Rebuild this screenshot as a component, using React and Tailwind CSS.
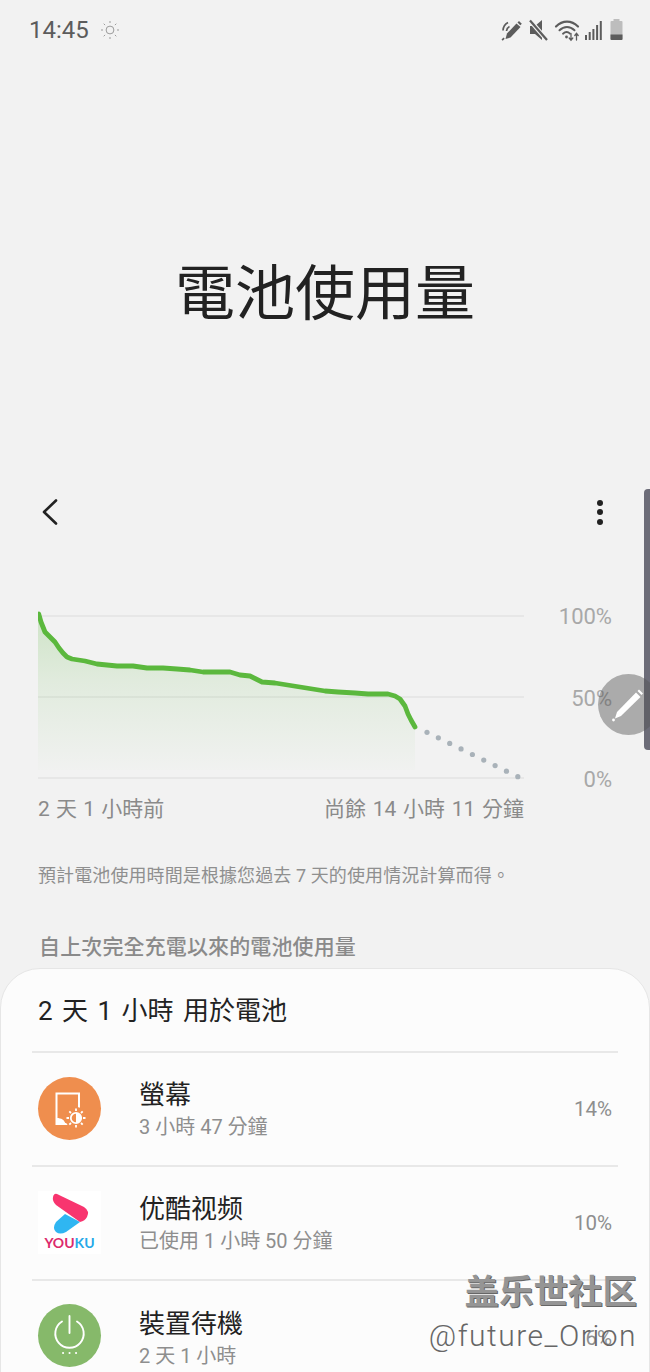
const curve = "38.7,614 41,622 45,632 50,637 55,642 59,648 63,653 67,657 72,659 85,661 97,664 117,666 133,666 147,668 163,668 177,669 190,670 203,672 230,672 240,675 250,676 256,679 262,682 275,683 300,687 325,691 338,692 355,693 368,694 388,694 395,696 400,699 405,706 408,714 411,720 415,727";
const dots = [0, 1, 2, 3, 4, 5, 6, 7, 8];

function Chart() {
  return (
    <svg width="486" height="172" viewBox="38 610 486 172" className="block shrink-0" fill="none">
      <defs>
        <linearGradient id="fade" x1="0" y1="0" x2="0" y2="1">
          <stop offset="0" stopColor="#5ab53c" stopOpacity="0.24" />
          <stop offset="0.45" stopColor="#5ab53c" stopOpacity="0.11" />
          <stop offset="1" stopColor="#5ab53c" stopOpacity="0.01" />
        </linearGradient>
      </defs>
      <path d="M38 616H524M38 697H524M38 778H524" stroke="#e3e3e3" strokeWidth="1.6" />
      <polygon points={`38,612 ${curve} 415,770 38,770`} fill="url(#fade)" />
      <polyline points={curve} stroke="#5bb83d" strokeWidth="4.8" strokeLinejoin="round" strokeLinecap="round" />
      {dots.map((i) => (
        <circle key={i} cx={427 + i * 11.35} cy={732.3 + i * 5.55} r="2.6" fill="#a9b2b9" />
      ))}
    </svg>
  );
}

function StatusIcons() {
  return (
    <svg width="122" height="24" viewBox="0 0 122 24" fill="none" className="block">
      <g fill="#5c5c5c">
        <path d="M6 15.500 L15.500 5.500 L19.500 9 L9.500 19.500 L4.500 21Z" />
        <path d="M0.500 21.500l2-2 1.200 1.200-2 2z" />
        <path d="M16.500 4.500l1.500-1.500 2.800 2.800-1.500 1.500z" />
      </g>
      <path d="M2 12.500c.2-3.500 2-6.500 5-8M5.500 13c.2-1.800 1.200-3.500 3-4.500" stroke="#5c5c5c" strokeWidth="1.700" />
      <g transform="translate(29 0)">
        <path d="M0 8h5L12 2v20l-7-6H0z" fill="#5c5c5c" />
        <path d="M0 2.500 L17 22" stroke="#f2f2f2" strokeWidth="4.500" />
        <path d="M0 2.500 L17 22" stroke="#5c5c5c" strokeWidth="2.200" />
      </g>
      <g transform="translate(54 0)" stroke="#5c5c5c" strokeLinecap="round">
        <path d="M1 8.500C7.500 2 16.500 2 23 8.500" strokeWidth="2.200" />
        <path d="M4.500 12.200C9 7.800 15 7.800 19.500 12.200" strokeWidth="2" />
        <path d="M8 15.700c2.300-2 5-2 7 0" strokeWidth="1.900" />
        <circle cx="11.500" cy="19" r="1.400" fill="#5c5c5c" stroke="none" />
        <path d="M16 15.500v6.500M14.200 20l1.800 2.200 1.800-2.200" strokeWidth="1.300" />
        <path d="M21.500 22v-6.500M19.800 17.500l1.700-2.100 1.700 2.100" strokeWidth="1.300" />
      </g>
      <g transform="translate(84 0)" fill="#5c5c5c">
        <rect x="0" y="17" width="2" height="5" />
        <rect x="3.700" y="14" width="2" height="8" />
        <rect x="7.400" y="11" width="2" height="11" />
        <rect x="11.100" y="7" width="2" height="15" />
        <rect x="14.800" y="3" width="2" height="19" />
      </g>
      <g transform="translate(109 0)">
        <rect x="3.500" y="1" width="6" height="3" fill="#bdbdbd" />
        <rect x="0.500" y="3" width="12" height="19" rx="1" fill="#bdbdbd" />
        <path d="M.5 16.500h12v4.500a1 1 0 0 1-1 1h-10a1 1 0 0 1-1-1z" fill="#5c5c5c" />
      </g>
    </svg>
  );
}

function Sun() {
  return (
    <svg width="20" height="20" viewBox="0 0 20 20" fill="none" stroke="#9b9b9b" strokeWidth="1">
      <circle cx="10" cy="10" r="3.900" />
      <path d="M10 1v2M10 17v2M1 10h2M17 10h2M3.700 3.700l1.400 1.400M14.900 14.900l1.400 1.400M3.700 16.300l1.400-1.400M14.900 5.100l1.400-1.400" />
    </svg>
  );
}

function ScreenIcon() {
  return (
    <div className="flex h-[63px] w-[63px] shrink-0 items-center justify-center rounded-full bg-[#ef8e4e]">
      <svg width="63" height="63" viewBox="0 0 63 63" fill="none">
        <path d="M41 32V16.500H18.500V47H32" stroke="#fff" strokeWidth="2" />
        <path d="M18.500 41c5 0 8 2 9 6H18.500z" fill="#fff" />
        <circle cx="38" cy="41" r="11" fill="#ef8e4e" />
        <circle cx="38" cy="41" r="5.200" stroke="#fff" strokeWidth="1.800" />
        <path d="M38 35.800a5.200 5.200 0 0 1 0 10.400z" fill="#fff" />
        <path d="M38 31.500v2.500M38 48v2.500M28.500 41H31M45 41h2.500M31.300 34.300l1.700 1.700M43 46l1.700 1.700M31.300 47.700l1.700-1.700M43 36l1.700-1.700" stroke="#fff" strokeWidth="1.800" />
      </svg>
    </div>
  );
}

function YoukuIcon() {
  return (
    <div className="flex h-[63px] w-[63px] shrink-0 flex-col items-center bg-white">
      <svg width="63" height="44" viewBox="0 0 63 44" fill="none" className="shrink-0">
        <path d="M27 23 L42 31 L28 41 Q22 44 18 41 Q14 37 18 31z" fill="#2fb6f2" />
        <path d="M19 3 L46 16 Q52 20 49 26 Q47 30 42 31 L18 14 Q14 10 15 6 Q16 2 19 3Z" fill="#f8356f" />
      </svg>
      <div className="mt-[1px] text-[14px] leading-[14px] font-bold" style={{ fontFamily: "Lato, sans-serif" }}>
        <span className="text-[#dc2a6c]">YOU</span>
        <span className="text-[#27a9e8]">KU</span>
      </div>
    </div>
  );
}

function PowerIcon() {
  return (
    <div className="flex h-[63px] w-[63px] shrink-0 items-center justify-center rounded-full bg-[#86b96a]">
      <svg width="63" height="63" viewBox="0 0 63 63" fill="none" stroke="#fff" strokeWidth="1.900" strokeLinecap="round">
        <path d="M31.500 12v17" />
        <path d="M24 17.500a14.200 14.200 0 1 0 15 0" />
        <path d="M25 49h.1M31.500 49h.1M38 49h.1" strokeWidth="2" />
      </svg>
    </div>
  );
}

function Row({ icon, title, sub, pct, last, sc }) {
  return (
    <div className={`flex h-[114px] shrink-0 items-center pr-[6px] pl-[6px] ${last ? "" : "border-b-2 border-[#e8e8e8]"}`}>
      <div className={last ? "mt-[-5px]" : "mt-[-2px]"}>{icon}</div>
      <div className="mt-[2px] ml-[38px] flex flex-1 flex-col" style={sc ? { fontFamily: 'Roboto, "Noto Sans CJK SC", sans-serif' } : undefined}>
        <div className="text-[26px] leading-[34px] text-[#222]">{title}</div>
        <div className="text-[20px] leading-[31px] text-[#8e8e8e]">{sub}</div>
      </div>
      <div className="text-[20.500px] text-[#8e8e8e]">{pct}</div>
    </div>
  );
}

export default function App() {
  return (
    <div
      className="relative flex h-[1372px] w-[650px] flex-col overflow-hidden bg-[#f2f2f2]"
      style={{ fontFamily: 'Roboto, "Noto Sans CJK TC", sans-serif' }}
    >
      <div className="flex h-[60px] shrink-0 items-center pr-[27px] pl-[29px]">
        <span className="text-[24px] leading-none text-[#5c5c5c]">14:45</span>
        <span className="ml-[11px]"><Sun /></span>
        <span className="ml-auto"><StatusIcons /></span>
      </div>

      <div className="flex h-[420px] shrink-0 items-start justify-center pt-[197px]">
        <h1 className="text-[60px] leading-[76px] font-normal text-[#222]">電池使用量</h1>
      </div>

      <div className="flex h-[64px] shrink-0 items-center justify-between pr-[47px] pl-[41px]">
        <svg width="18" height="28" viewBox="0 0 18 28" fill="none" stroke="#222" strokeWidth="2.600" strokeLinecap="round" strokeLinejoin="round">
          <path d="M15 2.500 3 14l12 11.500" />
        </svg>
        <div className="flex flex-col gap-[3.500px]">
          <span className="h-[6px] w-[6px] rounded-full bg-[#222]" />
          <span className="h-[6px] w-[6px] rounded-full bg-[#222]" />
          <span className="h-[6px] w-[6px] rounded-full bg-[#222]" />
        </div>
      </div>

      <div className="mt-[66px] flex h-[178px] shrink-0 items-start pl-[38px]">
        <Chart />
        <div className="mt-[-6px] ml-[34px] flex h-[189px] w-[54px] flex-col items-end justify-between text-[22px] leading-[26px] text-[#a8a8a8]">
          <span>100%</span>
          <span>50%</span>
          <span>0%</span>
        </div>
      </div>

      <div className="mt-[7px] flex w-[524px] shrink-0 justify-between pl-[38px] text-[21px] leading-[28px] text-[#8a8a8a]">
        <span className="[word-spacing:1px]">2 天 1 小時前</span>
        <span className="[word-spacing:1.500px]">尚餘 14 小時 11 分鐘</span>
      </div>

      <p className="mt-[41px] shrink-0 pl-[38px] text-[18px] leading-[24px] tracking-[0.1px] text-[#8f8f8f]">預計電池使用時間是根據您過去 7 天的使用情況計算而得。</p>

      <h2 className="mt-[45px] shrink-0 pl-[39px] text-[21px] leading-[28px] font-medium tracking-[0.13px] text-[#8a8a8a]">自上次完全充電以來的電池使用量</h2>

      <div className="mt-[7px] flex flex-1 flex-col rounded-t-[40px] border border-[#e6e6e6] bg-[#fcfcfc] px-[31px]">
        <div className="flex h-[84px] shrink-0 items-center border-b-2 border-[#e8e8e8] pt-[3px] pl-[6px] text-[26px] text-[#222] [word-spacing:3px]">2 天 1 小時 用於電池</div>
        <Row icon={<ScreenIcon />} title="螢幕" sub="3 小時 47 分鐘" pct="14%" />
        <Row icon={<YoukuIcon />} title="优酷视频" sub="已使用 1 小時 50 分鐘" pct="10%" sc />
        <Row icon={<PowerIcon />} title="裝置待機" sub="2 天 1 小時" pct="6%" last />
      </div>

      <div className="absolute top-[489px] right-0 h-[261px] w-[6px] rounded-l-[4px] bg-[#6c6c78]" />
      <div className="absolute top-[674px] left-[598px] flex h-[61px] w-[61px] items-center justify-center rounded-full bg-[#555]/45">
        <svg width="61" height="61" viewBox="0 0 61 61" className="shrink-0" fill="none">
          <path d="M19 38 L38 18.500 L42.500 23 L23 42 L17 44.500Z" fill="#fff" />
          <path d="M39.500 17 L41 15.500 L45 19.500 L43.500 21Z" fill="#fff" />
          <circle cx="15.500" cy="46" r="1.400" fill="#fff" />
        </svg>
      </div>

      <div className="absolute top-[1270px] right-[13px] flex flex-col items-end" style={{ fontFamily: 'Roboto, "Noto Sans CJK SC", sans-serif' }}>
        <div className="text-[34.500px] leading-[44px] font-bold text-[#959595] [text-shadow:1px_1px_0_#666]">盖乐世社区</div>
        <div className="mt-[3px] text-[30px] leading-[38px] font-light tracking-[1.500px] text-[#666]">@future_Orion</div>
      </div>
    </div>
  );
}
